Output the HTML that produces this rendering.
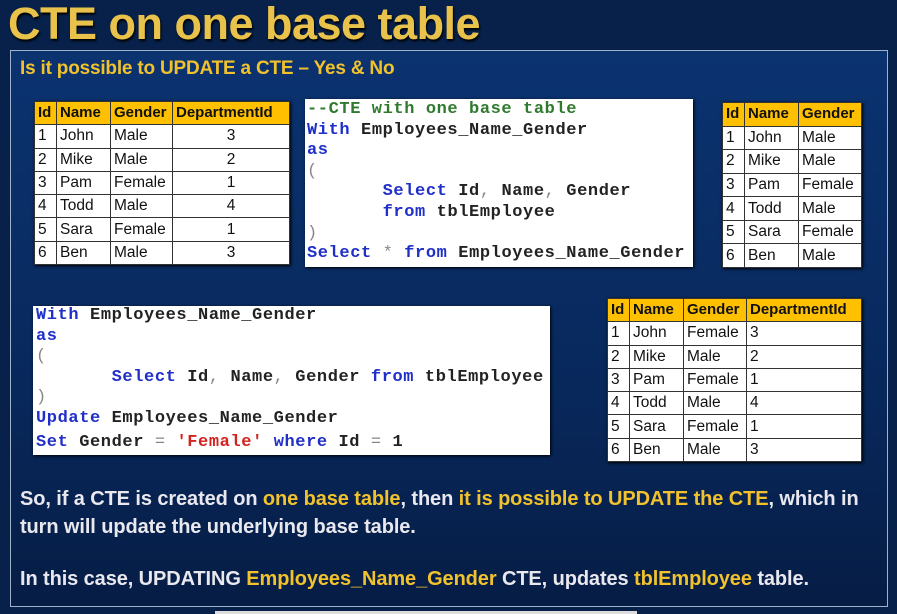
<!DOCTYPE html>
<html><head><meta charset="utf-8"><style>
*{margin:0;padding:0;box-sizing:border-box}
body{width:897px;height:614px;overflow:hidden;background:#07214a;position:relative;font-family:"Liberation Sans",sans-serif}
.title{position:absolute;left:8px;top:-2px;font-size:45px;font-weight:bold;color:#e8c24a;letter-spacing:-0.5px;text-shadow:1px 2px 2px #000;white-space:nowrap}
.panel{position:absolute;left:10px;top:50px;width:878px;height:557px;border:1px solid #9fb2cc;background:linear-gradient(#0b3370,#08285c 60%,#061d45)}
.sub{position:absolute;left:20px;top:58px;font-size:19px;font-weight:bold;color:#f2c22c;letter-spacing:-0.2px;white-space:nowrap}
table{position:absolute;border-collapse:collapse;background:#fff;font-family:"Liberation Sans",sans-serif;font-size:15.5px;color:#111;box-shadow:1px 1px 3px #000}
td{border:1.5px solid #333;padding:0 3px;white-space:nowrap;line-height:20px}
tr.h td{background:#ffc000;font-weight:bold;font-size:15px}
.c{text-align:center}
.code{position:absolute;background:#fff;font-family:"Liberation Mono",monospace;font-weight:bold;font-size:17px;letter-spacing:0.6px;color:#222;box-shadow:1px 1px 3px #000}
.code div{height:20.6px;line-height:20.6px;white-space:pre}
.k{color:#1f2fc8}.g{color:#2f7a2f}.r{color:#d2231f}.p{color:#888;font-weight:normal}
.t{position:absolute;left:20px;font-size:20px;font-weight:bold;color:#e8e8ee;letter-spacing:-0.1px;white-space:nowrap}
.y{color:#f2c22c}
</style></head><body>
<div class="title">CTE on one base table</div>
<div class="panel"></div>
<div class="sub">Is it possible to UPDATE a CTE – Yes &amp; No</div>

<table style="left:34px;top:101px;width:256px;height:164px">
<tr class="h"><td style="width:22px">Id</td><td style="width:54px">Name</td><td style="width:62px">Gender</td><td>DepartmentId</td></tr>
<tr><td>1</td><td>John</td><td>Male</td><td class="c">3</td></tr>
<tr><td>2</td><td>Mike</td><td>Male</td><td class="c">2</td></tr>
<tr><td>3</td><td>Pam</td><td>Female</td><td class="c">1</td></tr>
<tr><td>4</td><td>Todd</td><td>Male</td><td class="c">4</td></tr>
<tr><td>5</td><td>Sara</td><td>Female</td><td class="c">1</td></tr>
<tr><td>6</td><td>Ben</td><td>Male</td><td class="c">3</td></tr>
</table>

<div class="code" style="left:305px;top:99px;width:388px;height:168px;padding-top:1px;padding-left:2px"><div class="g">--CTE with one base table</div><div><span class="k">With</span> Employees_Name_Gender</div><div class="k">as</div><div class="p">(</div><div>       <span class="k">Select</span> Id<span class="p">,</span> Name<span class="p">,</span> Gender</div><div>       <span class="k">from</span> tblEmployee</div><div class="p">)</div><div><span class="k">Select</span> <span class="p">*</span> <span class="k">from</span> Employees_Name_Gender</div></div>

<table style="left:722px;top:102px;width:140px;height:166px">
<tr class="h"><td style="width:22px">Id</td><td style="width:54px">Name</td><td>Gender</td></tr>
<tr><td>1</td><td>John</td><td>Male</td></tr>
<tr><td>2</td><td>Mike</td><td>Male</td></tr>
<tr><td>3</td><td>Pam</td><td>Female</td></tr>
<tr><td>4</td><td>Todd</td><td>Male</td></tr>
<tr><td>5</td><td>Sara</td><td>Female</td></tr>
<tr><td>6</td><td>Ben</td><td>Male</td></tr>
</table>

<div class="code" style="left:33px;top:306px;width:517px;height:149px;padding-top:0;padding-left:3px"><div><span class="k">With</span> Employees_Name_Gender</div><div class="k">as</div><div class="p">(</div><div>       <span class="k">Select</span> Id<span class="p">,</span> Name<span class="p">,</span> Gender <span class="k">from</span> tblEmployee</div><div class="p">)</div><div><span class="k">Update</span> Employees_Name_Gender</div><div style="margin-top:3px"><span class="k">Set</span> Gender <span class="p">=</span> <span class="r">'Female'</span> <span class="k">where</span> Id <span class="p">=</span> 1</div></div>

<table style="left:607px;top:298px;width:255px;height:164px">
<tr class="h"><td style="width:22px">Id</td><td style="width:54px">Name</td><td style="width:63px">Gender</td><td>DepartmentId</td></tr>
<tr><td>1</td><td>John</td><td>Female</td><td>3</td></tr>
<tr><td>2</td><td>Mike</td><td>Male</td><td>2</td></tr>
<tr><td>3</td><td>Pam</td><td>Female</td><td>1</td></tr>
<tr><td>4</td><td>Todd</td><td>Male</td><td>4</td></tr>
<tr><td>5</td><td>Sara</td><td>Female</td><td>1</td></tr>
<tr><td>6</td><td>Ben</td><td>Male</td><td>3</td></tr>
</table>

<div class="t" style="top:488px">So, if a CTE is created on <span class="y">one base table</span>, then <span class="y">it is possible to UPDATE the CTE</span>, which in</div>
<div class="t" style="top:516px">turn will update the underlying base table.</div>
<div class="t" style="top:568px">In this case, UPDATING <span class="y">Employees_Name_Gender</span> CTE, updates <span class="y">tblEmployee</span> table.</div>
<div style="position:absolute;left:215px;top:611px;width:422px;height:3px;background:#ddd"></div>
</body></html>
